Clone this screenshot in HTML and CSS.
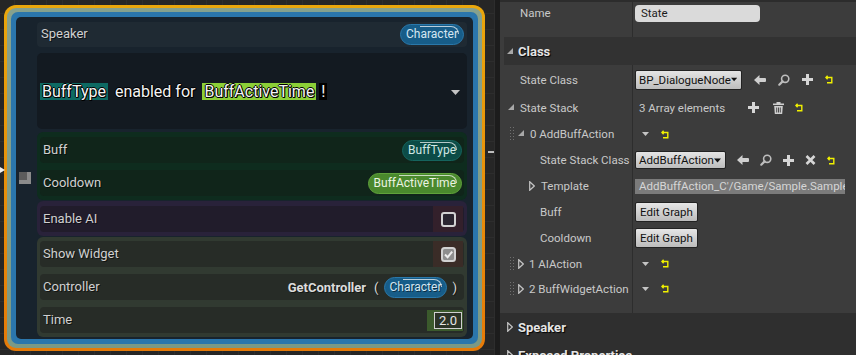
FILE: index.html
```html
<!DOCTYPE html>
<html>
<head>
<meta charset="utf-8">
<link rel="stylesheet" href="styles.css">
</head>
<body>
<div class="app">
  <div class="graph">
    <div class="exec-arrow"></div>
    <div class="reroute"></div>
    <div class="node">
      <div class="sel">
        <div class="rim">
          <div class="body">
            <div class="pin-sq"></div>
            <div class="row speaker"><span class="lbl">Speaker</span><span class="pill blue">Character</span></div>
            <div class="dialogue">
              <div class="dtext"><span class="hl teal">BuffType</span><span class="plain">enabled for</span><span class="hl lime">BuffActiveTime</span><span class="hl black">!</span></div>
              <svg class="dd" width="9" height="5" viewBox="0 0 9 5"><path d="M0 0H9L4.5 5Z" fill="#c4c4c4"/></svg>
            </div>
            <div class="group green">
              <div class="row"><span class="lbl">Buff</span><span class="pill teal">BuffType</span></div>
              <div class="row"><span class="lbl">Cooldown</span><span class="pill grn">BuffActiveTime</span></div>
            </div>
            <div class="group purple">
              <div class="row cbrow"><span class="lbl">Enable AI</span><span class="cb-wrap red"><span class="cb"></span></span></div>
            </div>
            <div class="group olive">
              <div class="row cbrow"><span class="lbl">Show Widget</span><span class="cb-wrap brown"><svg width="15" height="15" viewBox="0 0 15 15"><rect x="1" y="1" width="13" height="13" rx="2.5" fill="#8e8e8e" stroke="#d2d2d2" stroke-width="2"/><path d="M4 7.5 L6.6 10.2 L11.2 4.6" stroke="#ececec" stroke-width="2" fill="none"/></svg></span></div>
              <div class="row"><span class="lbl">Controller</span><span class="call"><b>GetController</b><span class="paren">(</span><span class="pill blue">Character</span><span class="paren2">)</span></span></div>
              <div class="row numrow"><span class="lbl">Time</span><span class="num-wrap"><span class="num">2.0</span></span></div>
            </div>
          </div>
        </div>
      </div>
    </div>
  </div>
  <div class="splitter"></div>
  <div class="panel">
    <div class="topline"></div>
    <div class="prow h22"><div class="lab p20">Name</div><div class="val"><span class="tbox">State</span></div></div>
    <div class="prow h13"><div class="lab"></div><div class="val"></div></div>
    <div class="cat"><svg class="tri-e" width="6" height="6" viewBox="0 0 6 6"><path d="M6 0V6H0Z" fill="#a8a8a8"/></svg><span>Class</span></div>
    <div class="prow h29"><div class="lab p20">State Class</div>
      <div class="val g12">
        <span class="combo w106">BP_DialogueNode<svg width="9" height="5" viewBox="0 0 9 5"><path d="M0 0H9L4.5 5Z" fill="#111"/></svg></span>
        <svg width="12" height="10" viewBox="0 0 12 10"><path d="M0 5 L5.5 0 V3 H11 Q12 3 12 4 V6 Q12 7 11 7 H5.5 V10 Z" fill="#cfcfcf"/></svg>
        <svg width="12" height="12" viewBox="0 0 12 12"><circle cx="7.2" cy="4.8" r="3.6" fill="none" stroke="#bdbdbd" stroke-width="1.6"/><path d="M4.6 7.4 L1.3 10.7" stroke="#bdbdbd" stroke-width="2.2" stroke-linecap="round"/></svg>
        <svg width="11" height="11" viewBox="0 0 11 11"><path d="M4 0h3v4h4v3h-4v4h-3v-4h-4v-3h4z" fill="#d6d6d6"/></svg>
        <svg width="8" height="9" viewBox="0 0 8 9"><path d="M2.6 0.8 L0.9 2.5 L2.6 4.2 M1 2.5 H6.8 V7.8 H2" stroke="#f0f000" stroke-width="1.4" fill="none"/></svg>
      </div>
    </div>
    <div class="prow h27"><div class="lab p8"><svg class="tri-e" width="6" height="6" viewBox="0 0 6 6"><path d="M6 0V6H0Z" fill="#a8a8a8"/></svg><span>State Stack</span></div>
      <div class="val">
        <span class="arr">3 Array elements</span>
        <svg class="m-plus" width="11" height="11" viewBox="0 0 11 11"><path d="M4 0h3v4h4v3h-4v4h-3v-4h-4v-3h4z" fill="#d6d6d6"/></svg>
        <svg class="m-trash" width="11" height="12" viewBox="0 0 11 12"><rect x="0" y="1.5" width="11" height="1.6" fill="#cfcfcf"/><rect x="3.5" y="0" width="4" height="2" fill="#cfcfcf"/><path d="M1.2 4 H9.8 L9.2 12 H1.8 Z" fill="#cfcfcf"/><path d="M3.7 5.5 V10.5 M5.5 5.5 V10.5 M7.3 5.5 V10.5" stroke="#3c3c3c" stroke-width="0.9"/></svg>
        <svg class="m-reset" width="8" height="9" viewBox="0 0 8 9"><path d="M2.6 0.8 L0.9 2.5 L2.6 4.2 M1 2.5 H6.8 V7.8 H2" stroke="#f0f000" stroke-width="1.4" fill="none"/></svg>
      </div>
    </div>
    <div class="prow h26"><div class="lab p10"><svg class="dots" width="4" height="14" viewBox="0 0 4 14"><g fill="#707070"><rect x="0" y="0" width="1" height="1"/><rect x="3" y="0" width="1" height="1"/><rect x="0" y="3" width="1" height="1"/><rect x="3" y="3" width="1" height="1"/><rect x="0" y="6" width="1" height="1"/><rect x="3" y="6" width="1" height="1"/><rect x="0" y="9" width="1" height="1"/><rect x="3" y="9" width="1" height="1"/><rect x="0" y="12" width="1" height="1"/><rect x="3" y="12" width="1" height="1"/></g></svg><svg class="tri-e2" width="6" height="6" viewBox="0 0 6 6"><path d="M6 0V6H0Z" fill="#a8a8a8"/></svg><span>0 AddBuffAction</span></div>
      <div class="val p9 g12">
        <svg width="7" height="4" viewBox="0 0 7 4"><path d="M0 0H7L3.5 4Z" fill="#c4c4c4"/></svg>
        <svg width="8" height="9" viewBox="0 0 8 9"><path d="M2.6 0.8 L0.9 2.5 L2.6 4.2 M1 2.5 H6.8 V7.8 H2" stroke="#f0f000" stroke-width="1.4" fill="none"/></svg>
      </div>
    </div>
    <div class="prow h26"><div class="lab p40">State Stack Class</div>
      <div class="val g11">
        <span class="combo sm w91">AddBuffAction<svg width="9" height="5" viewBox="0 0 9 5"><path d="M0 0H9L4.5 5Z" fill="#111"/></svg></span>
        <svg width="12" height="10" viewBox="0 0 12 10"><path d="M0 5 L5.5 0 V3 H11 Q12 3 12 4 V6 Q12 7 11 7 H5.5 V10 Z" fill="#cfcfcf"/></svg>
        <svg width="12" height="12" viewBox="0 0 12 12"><circle cx="7.2" cy="4.8" r="3.6" fill="none" stroke="#bdbdbd" stroke-width="1.6"/><path d="M4.6 7.4 L1.3 10.7" stroke="#bdbdbd" stroke-width="2.2" stroke-linecap="round"/></svg>
        <svg width="11" height="11" viewBox="0 0 11 11"><path d="M4 0h3v4h4v3h-4v4h-3v-4h-4v-3h4z" fill="#d6d6d6"/></svg>
        <svg width="11" height="10" viewBox="0 0 11 10"><path d="M1.5 1 L9.5 9 M9.5 1 L1.5 9" stroke="#d6d6d6" stroke-width="2.6"/></svg>
        <svg width="8" height="9" viewBox="0 0 8 9"><path d="M2.6 0.8 L0.9 2.5 L2.6 4.2 M1 2.5 H6.8 V7.8 H2" stroke="#f0f000" stroke-width="1.4" fill="none"/></svg>
      </div>
    </div>
    <div class="prow h26"><div class="lab p29"><svg class="tri-c" width="6" height="10" viewBox="0 0 6 10"><path d="M0.7 0.7 L5.3 5 L0.7 9.3 Z" stroke="#c4c4c4" stroke-width="1.2" fill="none"/></svg><span>Template</span></div>
      <div class="val"><span class="ro">AddBuffAction_C'/Game/Sample.Sample</span></div>
    </div>
    <div class="prow h26"><div class="lab p40">Buff</div><div class="val"><span class="btn">Edit Graph</span></div></div>
    <div class="prow h26"><div class="lab p40">Cooldown</div><div class="val"><span class="btn">Edit Graph</span></div></div>
    <div class="prow h25"><div class="lab p10"><svg class="dots" width="4" height="14" viewBox="0 0 4 14"><g fill="#707070"><rect x="0" y="0" width="1" height="1"/><rect x="3" y="0" width="1" height="1"/><rect x="0" y="3" width="1" height="1"/><rect x="3" y="3" width="1" height="1"/><rect x="0" y="6" width="1" height="1"/><rect x="3" y="6" width="1" height="1"/><rect x="0" y="9" width="1" height="1"/><rect x="3" y="9" width="1" height="1"/><rect x="0" y="12" width="1" height="1"/><rect x="3" y="12" width="1" height="1"/></g></svg><svg class="tri-c2" width="6" height="10" viewBox="0 0 6 10"><path d="M0.7 0.7 L5.3 5 L0.7 9.3 Z" stroke="#c4c4c4" stroke-width="1.2" fill="none"/></svg><span>1 AIAction</span></div>
      <div class="val p9 g12">
        <svg width="7" height="4" viewBox="0 0 7 4"><path d="M0 0H7L3.5 4Z" fill="#c4c4c4"/></svg>
        <svg width="8" height="9" viewBox="0 0 8 9"><path d="M2.6 0.8 L0.9 2.5 L2.6 4.2 M1 2.5 H6.8 V7.8 H2" stroke="#f0f000" stroke-width="1.4" fill="none"/></svg>
      </div>
    </div>
    <div class="prow h25"><div class="lab p10"><svg class="dots" width="4" height="14" viewBox="0 0 4 14"><g fill="#707070"><rect x="0" y="0" width="1" height="1"/><rect x="3" y="0" width="1" height="1"/><rect x="0" y="3" width="1" height="1"/><rect x="3" y="3" width="1" height="1"/><rect x="0" y="6" width="1" height="1"/><rect x="3" y="6" width="1" height="1"/><rect x="0" y="9" width="1" height="1"/><rect x="3" y="9" width="1" height="1"/><rect x="0" y="12" width="1" height="1"/><rect x="3" y="12" width="1" height="1"/></g></svg><svg class="tri-c2" width="6" height="10" viewBox="0 0 6 10"><path d="M0.7 0.7 L5.3 5 L0.7 9.3 Z" stroke="#c4c4c4" stroke-width="1.2" fill="none"/></svg><span>2 BuffWidgetAction</span></div>
      <div class="val p9 g12">
        <svg width="7" height="4" viewBox="0 0 7 4"><path d="M0 0H7L3.5 4Z" fill="#c4c4c4"/></svg>
        <svg width="8" height="9" viewBox="0 0 8 9"><path d="M2.6 0.8 L0.9 2.5 L2.6 4.2 M1 2.5 H6.8 V7.8 H2" stroke="#f0f000" stroke-width="1.4" fill="none"/></svg>
      </div>
    </div>
    <div class="prow h12"><div class="lab"></div><div class="val"></div></div>
    <div class="lower">
      <div class="cat dark"><svg class="tri-c3" width="6" height="10" viewBox="0 0 6 10"><path d="M0.7 0.7 L5.3 5 L0.7 9.3 Z" stroke="#c4c4c4" stroke-width="1.2" fill="none"/></svg><span>Speaker</span></div>
      <div class="cat dark"><svg class="tri-c3" width="6" height="10" viewBox="0 0 6 10"><path d="M0.7 0.7 L5.3 5 L0.7 9.3 Z" stroke="#c4c4c4" stroke-width="1.2" fill="none"/></svg><span>Exposed Properties</span></div>
    </div>
  </div>
</div>
</body>
</html>
```

FILE: styles.css
```css
* { box-sizing: border-box; margin: 0; padding: 0; }
html, body { width: 856px; height: 355px; overflow: hidden; background: #262626; }
body { font-family: Roboto, "Noto Sans", sans-serif; }

.app { display: flex; width: 856px; height: 355px; }

/* ---------- graph ---------- */
.graph {
  position: relative;
  width: 495px;
  height: 355px;
  background-color: #262626;
  background-image:
    linear-gradient(#2d2d2d 1px, transparent 1px),
    linear-gradient(90deg, #2d2d2d 1px, transparent 1px);
  background-size: 16px 16px;
  background-position: -2px -3px;
  padding: 5px 0 0 4px;
}
.splitter { width: 5px; background: #1c1c1c; }

.exec-arrow {
  position: absolute; left: 0; top: 167px;
  width: 0; height: 0;
  border-top: 3px solid transparent;
  border-bottom: 3px solid transparent;
  border-left: 5px solid #f0f0f0;
}
.reroute {
  position: absolute; left: 488px; top: 151px;
  width: 6px; height: 2px; background: #bdbdbd;
}

.node {
  width: 481px; height: 346px;
  padding: 3px;
  border-radius: 12px;
  background: linear-gradient(#eaa70c, #e67a08);
}
.sel {
  height: 100%;
  padding: 4px;
  border-radius: 9px;
  background: linear-gradient(#86a18e, #7b9985);
}
.rim {
  height: 100%;
  padding: 5px;
  border-radius: 7px;
  background: #2b76ac;
}
.body {
  position: relative;
  height: 100%;
  border-radius: 5px;
  background: #18232d;
  padding: 5px 6px 1px 21px;
  display: flex;
  flex-direction: column;
}

.pin-sq {
  position: absolute; left: 3px; top: 155px;
  width: 12px; height: 12px;
  background: #8b8b8b;
}
.pin-sq::before {
  content: ""; position: absolute; left: 0; top: 0;
  width: 8px; height: 8px; background: #5c5c5c;
}

.lbl {
  font-size: 13px;
  color: #d0d0d0;
  text-shadow: 1px 1px 0 rgba(0,0,0,0.55);
  margin-top: -2px;
}

.row {
  height: 26px;
  display: flex;
  align-items: center;
  justify-content: space-between;
  padding: 0 2px 0 3px;
  border-radius: 4px;
}
.speaker {
  height: 25px;
  background: #1f2a33;
  padding: 0 3px 0 4px;
}

.dialogue {
  margin-top: 6px;
  height: 76px;
  border-radius: 5px;
  background: #131a21;
  display: flex;
  align-items: center;
  justify-content: space-between;
  padding: 0 7px 0 3px;
}
.dtext {
  display: flex;
  align-items: center;
  font-size: 16px;
  color: #f4f4f4;
  text-shadow: 1px 0 0 #000, -1px 0 0 #000, 0 1px 0 #000, 0 -1px 0 #000, 1px 1px 0 #000;
}
.hl { height: 17px; line-height: 17px; padding: 0 2px; }
.hl.teal { background: #0e6a63; }
.hl.lime { background: #8ccf37; }
.hl.black { background: #000; padding: 0 2px; margin-left: 3px; }
.plain { margin: 0 7px 0 7px; }
.dd { margin-top: 2px; }

.group {
  border-radius: 6px;
  display: flex;
  flex-direction: column;
  padding: 5px 3px 4px 3px;
}
.group.green { margin-top: 3px; background: #0e2c1e; gap: 7px; }
.group.green .row { background: #10251a; }
.group.purple { margin-top: 1px; background: #29223a; }
.group.purple .row { background: #211c2b; }
.group.olive { margin-top: 1px; background: #313a31; gap: 7px; padding: 4px 3px 4px 3px; }
.group.olive .row { background: #272c27; }

.pill {
  position: relative;
  height: 21px;
  line-height: 19px;
  padding: 0 5px;
  border-radius: 11px;
  font-size: 12px;
  border: 1px solid;
  white-space: nowrap;
}
.pill::after {
  content: "";
  position: absolute;
  right: 4px; top: 1px;
  width: 62%; height: 7px;
  border-top: 1.5px solid rgba(255,255,255,0.7);
  border-right: 1.5px solid rgba(255,255,255,0.7);
  border-top-right-radius: 8px;
}
.pill.blue { background: #175d89; border-color: #2a78aa; color: #d4e6f2; }
.pill.teal { background: #0c4c47; border-color: #15645d; color: #d0e8e4; }
.pill.grn { background: #4a892d; border-color: #60a23b; color: #eaf3e2; }

.cbrow { padding-right: 1px; }
.cb-wrap {
  width: 30px; height: 26px;
  display: flex; align-items: center; justify-content: center;
}
.cb-wrap.red { background: #33202b; }
.cb-wrap.brown { background: #3a2c27; }
.cb {
  width: 15px; height: 15px;
  border: 2px solid #d2d2d2;
  border-radius: 3px;
  background: #2a2530;
}

.call {
  display: flex; align-items: center;
  font-size: 13px; color: #dcdcdc;
  text-shadow: 1px 1px 0 rgba(0,0,0,0.5);
  padding-right: 5px;
}
.call b { font-weight: 700; }
.paren { margin: 0 5px 0 8px; }
.paren2 { margin-left: 5px; }

.numrow { padding-right: 1px; }
.num-wrap {
  height: 21px;
  background: #3b5a2c;
  padding: 2px 1px 2px 7px;
  display: flex;
  align-items: center;
}
.num {
  height: 17px;
  line-height: 15px;
  border: 1px solid #d0d0d0;
  background: #2b3327;
  color: #e4e4e4;
  font-size: 13px;
  padding: 0 4px;
}

/* ---------- details panel ---------- */
.panel {
  flex: 1;
  background: #3c3c3c;
  display: flex;
  flex-direction: column;
  font-size: 11.5px;
  color: #c9c9c9;
  min-width: 0;
}
.topline { height: 2px; background: #2c2c2c; flex: none; }
.prow { display: flex; flex: none; }
.h12 { height: 12px; } .h13 { height: 13px; } .h22 { height: 22px; }
.h25 { height: 25px; } .h26 { height: 26px; } .h27 { height: 27px; } .h29 { height: 29px; }

.lab {
  width: 133px;
  flex: none;
  border-right: 1px solid #2d2d2d;
  display: flex;
  align-items: center;
  white-space: nowrap;
}
.p8 { padding-left: 8px; } .p10 { padding-left: 10px; } .p20 { padding-left: 20px; }
.p29 { padding-left: 29px; } .p40 { padding-left: 40px; }
.val {
  flex: 1;
  display: flex;
  align-items: center;
  padding-left: 2px;
  min-width: 0;
}
.val.p9 { padding-left: 9px; }
.g11 { gap: 11px; } .g12 { gap: 12px; }

.tri-e { margin-right: 6px; margin-top: -2px; }
.tri-e2 { margin-right: 6px; margin-top: -2px; }
.tri-c { margin-right: 6px; }
.tri-c2 { margin-right: 5px; }
.dots { margin-right: 4px; flex: none; }

.cat {
  height: 28px;
  margin-left: 4px;
  background: #323232;
  display: flex;
  align-items: center;
  padding-left: 3px;
  font-size: 13px;
  font-weight: 700;
  color: #e4e4e4;
  text-shadow: 1px 1px 1px #000;
  flex: none;
  white-space: nowrap;
}
.cat .tri-e { margin-right: 5px; margin-top: 0; }
.lower { flex: 1; background: #2f2f2f; display: flex; flex-direction: column; }
.cat.dark { background: #2f2f2f; }
.tri-c3 { margin-right: 5px; }

.tbox {
  width: 125px; height: 17px;
  line-height: 17px;
  background: #dadada;
  border-radius: 4px;
  color: #1c1c1c;
  padding-left: 6px;
}

.combo {
  height: 20px;
  display: flex;
  align-items: center;
  justify-content: space-between;
  padding: 0 4px 0 3px;
  background: linear-gradient(#e4e4e4, #bdbdbd);
  border: 1px solid #222;
  border-radius: 2px;
  color: #111;
  white-space: nowrap;
}
.combo.sm { height: 18px; }
.w106 { width: 107px; }
.w91 { width: 91px; }

.arr { padding-left: 4px; }
.m-plus { margin-left: 23px; }
.m-trash { margin-left: 14px; }
.m-reset { margin-left: 11px; }

.ro {
  width: 210px; height: 15px;
  line-height: 15px;
  background: #7b7b7b;
  color: #d6d6d6;
  padding-left: 4px;
  overflow: hidden;
  white-space: nowrap;
  flex: none;
}

.btn {
  height: 20px;
  line-height: 18px;
  padding: 0 4px;
  background: linear-gradient(#e6e6e6, #bcbcbc);
  border: 1px solid #222;
  border-radius: 2px;
  color: #111;
}
```
